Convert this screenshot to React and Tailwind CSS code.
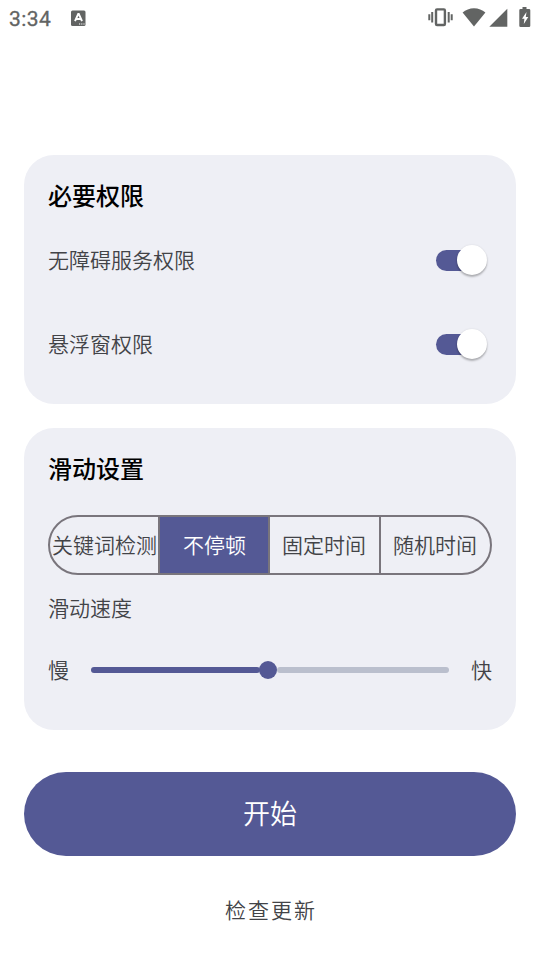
import React, { useState } from 'react';

const MODES = ['关键词检测', '不停顿', '固定时间', '随机时间'];

const StatusBar = () => (
  <div className="flex h-9 items-center text-[#626463]">
    <span className="ml-[9px] mt-[2px] w-[62px] font-[Roboto] text-[21px] font-normal leading-6 tracking-[0.4px] [-webkit-text-stroke:0.3px_currentColor]">3:34</span>
    {/* Input method indicator */}
    <svg className="h-4 w-[15px]" viewBox="0 0 15 16">
      <rect y=".5" width="14.500" height="15.500" rx="1.500" fill="currentColor" />
      <path d="M4 11.200 7.200 4h.6L11 11.200M5.500 9h4" fill="none" stroke="#fff" strokeWidth="1.900" />
      <path d="M8 14h1.200M10.200 14h1.200M12.400 14h1.200" stroke="#fff" strokeWidth="1.200" />
    </svg>
    <div className="ml-auto mr-[9px] flex items-center pb-[2px]">
      {/* Vibrate */}
      <svg className="mr-[9px] h-[20px] w-[26px]" viewBox="0 0 26 20" fill="none" stroke="currentColor">
        <rect x="9" y="2.400" width="8.900" height="15.600" rx="1" strokeWidth="2.400" />
        <path d="M2.300 7.200v6M5.200 4.900v10.600M21.700 4.900v10.600M24.700 7.200v6" strokeWidth="2" />
      </svg>
      <svg className="mr-[3px] h-[19px] w-6" viewBox="0 0 24 19" fill="currentColor">
        <path d="M12 18.600.6 4.500C3.700 1.900 7.600.3 12 .3s8.300 1.600 11.400 4.200z" />
      </svg>
      <svg className="mr-[11px] h-[19px] w-[19px]" viewBox="0 0 19 19" fill="currentColor">
        <path d="M18.300.8v18H.3z" />
      </svg>
      <svg className="h-5 w-3" viewBox="0 0 12 20" fill="currentColor">
        <path d="M3.500 0h4v2H10q1.300 0 1.300 1.300v15.400Q11.300 20 10 20H1.600Q.3 20 .3 18.700V3.300Q.3 2 1.600 2h1.900z" />
        <path d="M7.500 5 3 11.700h2.400L4.800 17l4.500-7.100H6.800z" fill="#fff" />
      </svg>
    </div>
  </div>
);

const Card = ({ title, className, children }) => (
  <section className={`rounded-[30px] bg-[#eeeff5] px-6 ${className}`}>
    <h2 className="pt-[22px] text-2xl font-medium leading-9 text-black">{title}</h2>
    {children}
  </section>
);

const PermissionRow = ({ label }) => {
  const [enabled, setEnabled] = useState(true);

  return (
    <div className="flex h-[84px] items-center justify-between">
      <span className="pb-[2px]">{label}</span>
      <button
        type="button"
        role="switch"
        aria-checked={enabled}
        aria-label={label}
        onClick={() => setEnabled(!enabled)}
        className={`mr-[6px] flex h-[21px] w-[50px] items-center rounded-full ${
          enabled ? 'justify-end bg-[#545995]' : 'justify-start bg-[#babfcd]'
        }`}
      >
        <span className="-mr-[0.5px] size-[30px] shrink-0 rounded-full bg-white shadow-[0_2px_2px_rgba(0,0,0,0.26),0_0_2px_rgba(0,0,0,0.1)]" />
      </button>
    </div>
  );
};

const App = () => {
  const [mode, setMode] = useState(1);

  return (
    <div className="flex h-[960px] w-[540px] flex-col bg-white font-['Noto_Sans_CJK_SC',sans-serif] text-[21px] font-[350] leading-8 text-[#424347]">
      <StatusBar />
      <main className="flex flex-col px-6 pt-[119px]">
        <Card title="必要权限" className="h-[249px]">
          <div className="pt-[5px]">
            <PermissionRow label="无障碍服务权限" />
            <PermissionRow label="悬浮窗权限" />
          </div>
        </Card>

        <Card title="滑动设置" className="mt-6 h-[302px]">
          <div className="mt-[29px] grid h-[60px] grid-cols-[110px_110px_111px_1fr] overflow-hidden rounded-full border-2 border-[#79757c]">
            {MODES.map((name, index) => (
              <button
                key={name}
                type="button"
                onClick={() => setMode(index)}
                className={`flex items-center justify-center whitespace-nowrap border-[#79757c] pb-[2px] ${
                  index < MODES.length - 1 ? 'border-r-2' : ''
                } ${index < 2 ? 'pl-px' : 'pr-px'} ${mode === index ? 'bg-[#545995] text-white' : ''}`}
              >
                {name}
              </button>
            ))}
          </div>
          <p className="mt-4">滑动速度</p>

          {/* Speed slider */}
          <div className="mt-8 flex items-center">
            <span className="-mt-[2px]">慢</span>
            <div className="mx-[22px] flex flex-1 items-center">
              <div className="h-[6px] w-[169px] rounded-full bg-[#545995]" />
              <div className="-ml-[1px] size-[18px] rounded-full bg-[#545995]" />
              <div className="h-[6px] flex-1 rounded-full bg-[#babfcd]" />
            </div>
            <span className="-mt-[2px]">快</span>
          </div>
        </Card>

        <button type="button" className="mt-[42px] h-[84px] rounded-full bg-[#545995] pb-[2px] text-[27px] text-white">
          开始
        </button>
        <button type="button" className="ml-[2px] mt-[37px] self-center tracking-[2px]">
          检查更新
        </button>
      </main>
    </div>
  );
};

export default App;
